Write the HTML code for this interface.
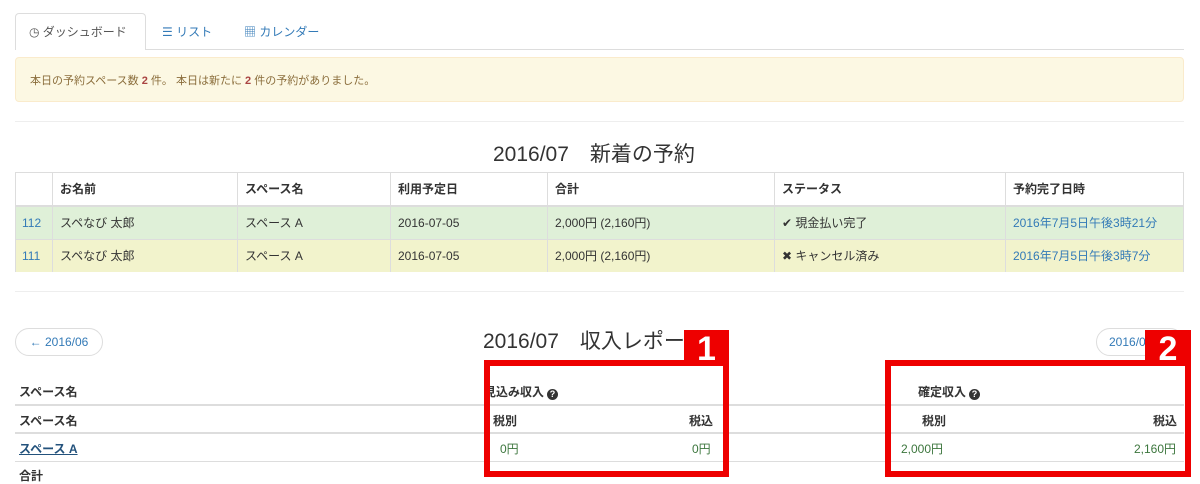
<!DOCTYPE html>
<html><head><meta charset="utf-8"><style>
*{margin:0;padding:0;box-sizing:border-box}
body{width:1200px;height:477px;overflow:hidden;background:#fff;font-family:"Liberation Sans","Noto Sans CJK JP",sans-serif;font-size:12px;color:#333;position:relative}
.a{position:absolute;white-space:nowrap;line-height:16px}
.lnk{color:#337ab7}
.bx{position:absolute;border:6px solid #ee0000}
.tab{position:absolute;background:#ee0000;color:#fff;font-weight:bold;font-size:34px;text-align:center;line-height:38px}
.q{display:inline-block;width:11px;height:11px;border-radius:50%;background:#333;color:#fff;font-size:9px;line-height:11px;text-align:center;vertical-align:-1px;margin-left:3px}
</style></head><body>
<div class="a" style="left:15px;top:13px;width:131px;height:37px;border:1px solid #ddd;border-bottom:none;border-radius:4px 4px 0 0;background:#fff"></div>
<div class="a" style="left:146px;top:49px;width:1038px;border-top:1px solid #ddd"></div>
<div class="a" style="left:29px;top:24px;color:#555">◷ ダッシュボード</div>
<div class="a lnk" style="left:162px;top:24px">☰ リスト</div>
<div class="a lnk" style="left:244px;top:24px">▦ カレンダー</div>
<div class="a" style="left:15px;top:57px;width:1169px;height:45px;background:#fcf8e3;border:1px solid #faebcc;border-radius:4px"></div>
<div class="a" style="left:30px;top:73px;color:#8a6d3b;font-size:11px">本日の予約スペース数 <b style="color:#a94442">2</b> 件。 本日は新たに <b style="color:#a94442">2</b> 件の予約がありました。</div>
<div class="a" style="left:15px;top:121px;width:1169px;border-top:1px solid #eee"></div>
<div class="a" style="left:493px;top:142px;font-size:21px;line-height:26px">2016/07　新着の予約</div>
<div class="a" style="left:15px;top:172px;width:1169px;height:100px;border:1px solid #ddd"></div>
<div class="a" style="left:16px;top:206px;width:1167px;height:33px;background:#dff0d8"></div>
<div class="a" style="left:16px;top:239px;width:1167px;height:33px;background:#f2f3cc"></div>
<div class="a" style="left:16px;top:205px;width:1167px;border-top:2px solid #ddd"></div>
<div class="a" style="left:16px;top:239px;width:1167px;border-top:1px solid #ddd"></div>
<div class="a" style="left:52px;top:172px;height:100px;border-left:1px solid #ddd"></div>
<div class="a" style="left:237px;top:172px;height:100px;border-left:1px solid #ddd"></div>
<div class="a" style="left:390px;top:172px;height:100px;border-left:1px solid #ddd"></div>
<div class="a" style="left:547px;top:172px;height:100px;border-left:1px solid #ddd"></div>
<div class="a" style="left:774px;top:172px;height:100px;border-left:1px solid #ddd"></div>
<div class="a" style="left:1005px;top:172px;height:100px;border-left:1px solid #ddd"></div>
<div class="a" style="top:181px;left:60px;font-weight:bold">お名前</div>
<div class="a" style="top:181px;left:245px;font-weight:bold">スペース名</div>
<div class="a" style="top:181px;left:398px;font-weight:bold">利用予定日</div>
<div class="a" style="top:181px;left:555px;font-weight:bold">合計</div>
<div class="a" style="top:181px;left:782px;font-weight:bold">ステータス</div>
<div class="a" style="top:181px;left:1013px;font-weight:bold">予約完了日時</div>
<div class="a lnk" style="top:215px;left:22px">112</div>
<div class="a" style="top:215px;left:60px">スペなび 太郎</div>
<div class="a" style="top:215px;left:245px">スペース A</div>
<div class="a" style="top:215px;left:398px">2016-07-05</div>
<div class="a" style="top:215px;left:555px">2,000円 (2,160円)</div>
<div class="a" style="top:215px;left:782px">✔ 現金払い完了</div>
<div class="a lnk" style="top:215px;left:1013px">2016年7月5日午後3時21分</div>
<div class="a lnk" style="top:248px;left:22px">111</div>
<div class="a" style="top:248px;left:60px">スペなび 太郎</div>
<div class="a" style="top:248px;left:245px">スペース A</div>
<div class="a" style="top:248px;left:398px">2016-07-05</div>
<div class="a" style="top:248px;left:555px">2,000円 (2,160円)</div>
<div class="a" style="top:248px;left:782px">✖ キャンセル済み</div>
<div class="a lnk" style="top:248px;left:1013px">2016年7月5日午後3時7分</div>
<div class="a" style="left:15px;top:291px;width:1169px;border-top:1px solid #eee"></div>
<div class="a lnk" style="left:15px;top:328px;width:88px;height:28px;border:1px solid #ddd;border-radius:14px;text-align:center;line-height:26px">← 2016/06</div>
<div class="a lnk" style="left:1096px;top:328px;width:88px;height:28px;border:1px solid #ddd;border-radius:14px;padding-left:12px;line-height:26px">2016/08 →</div>
<div class="a" style="left:483px;top:329px;font-size:21px;line-height:26px">2016/07　収入レポート</div>
<div class="a" style="top:384px;left:19px;font-weight:bold">スペース名</div>
<div class="a" style="top:384px;left:484px;font-weight:bold">見込み収入<span class="q">?</span></div>
<div class="a" style="top:384px;left:918px;font-weight:bold">確定収入<span class="q">?</span></div>
<div class="a" style="left:15px;top:404px;width:1169px;border-top:2px solid #ddd"></div>
<div class="a" style="top:413px;left:493px;font-weight:bold">税別</div>
<div class="a" style="top:413px;left:19px;font-weight:bold">スペース名</div>
<div class="a" style="top:413px;left:689px;font-weight:bold">税込</div>
<div class="a" style="top:413px;left:922px;font-weight:bold">税別</div>
<div class="a" style="top:413px;left:1153px;font-weight:bold">税込</div>
<div class="a" style="left:15px;top:432px;width:1169px;border-top:2px solid #ddd"></div>
<div class="a" style="top:441px;left:19px;font-weight:bold;color:#23527c;text-decoration:underline">スペース A</div>
<div class="a" style="top:441px;left:500px;color:#3c763d">0円</div>
<div class="a" style="top:441px;left:692px;color:#3c763d">0円</div>
<div class="a" style="top:441px;left:901px;color:#3c763d">2,000円</div>
<div class="a" style="top:441px;left:1134px;color:#3c763d">2,160円</div>
<div class="a" style="left:15px;top:461px;width:1169px;border-top:1px solid #ddd"></div>
<div class="a" style="top:468px;left:19px;font-weight:bold">合計</div>
<div class="bx" style="left:484px;top:360px;width:245px;height:117px"></div>
<div class="tab" style="left:684px;top:330px;width:45px;height:36px">1</div>
<div class="bx" style="left:885px;top:360px;width:306px;height:117px"></div>
<div class="tab" style="left:1145px;top:330px;width:46px;height:36px">2</div>
</body></html>
